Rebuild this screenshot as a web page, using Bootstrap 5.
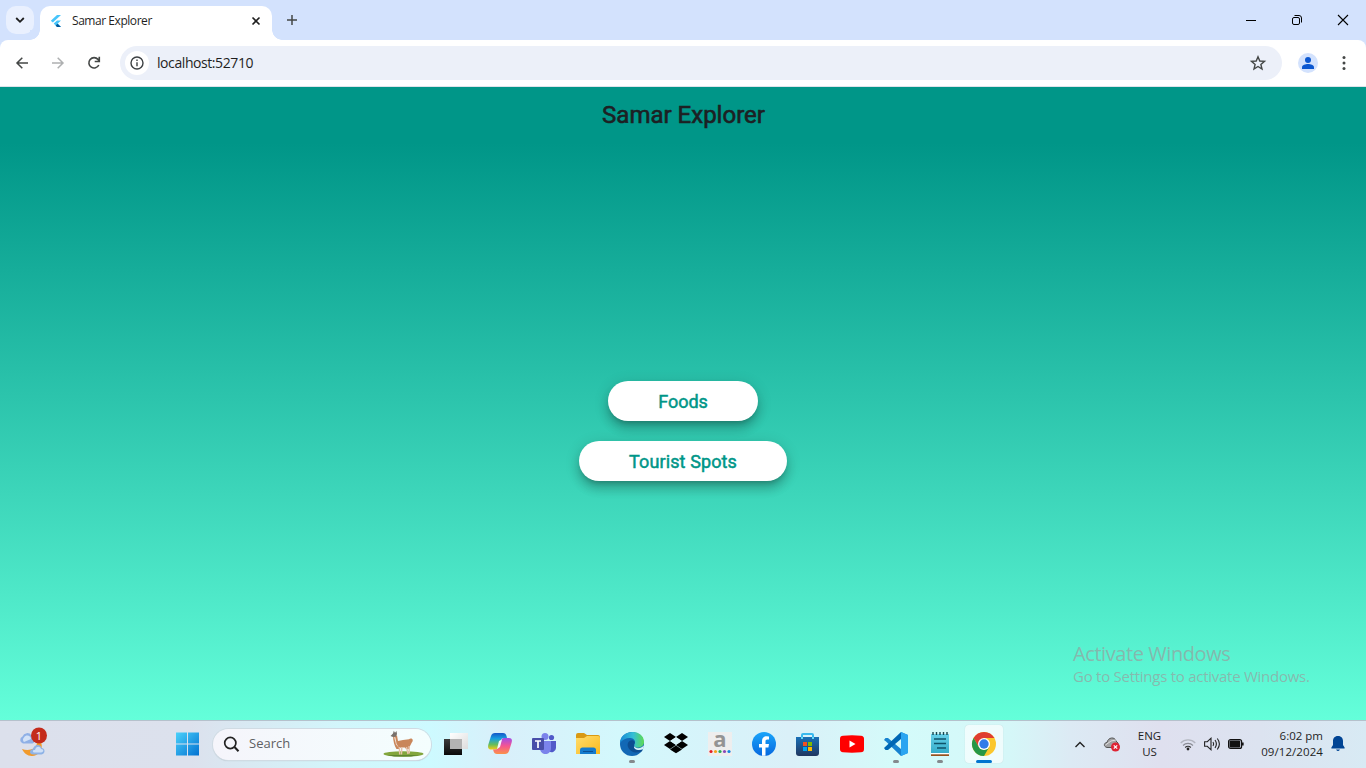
<!DOCTYPE html>
<html lang="en">
<head>
<meta charset="utf-8">
<title>Samar Explorer</title>
<link href="https://cdn.jsdelivr.net/npm/bootstrap@5.3.0/dist/css/bootstrap.min.css" rel="stylesheet">
<style>
body{width:1366px;height:768px;font-family:"Open Sans","Noto Sans",sans-serif;color:#1f1f1f;background:#fff}
svg{display:block;flex:none;overflow:visible}
.tabstrip{height:40px;background:#d3e2fd}
.tab-menu{width:28px;height:28px;border-radius:10px;background:#e9f0fe;margin:6px 6px 0}
.tab-active{width:232px;height:34px;margin-top:6px;border-radius:10px 10px 0 0;background:#fff;font-size:12px;padding:0 10px;position:relative}
.tab-active::before,.tab-active::after{content:"";position:absolute;bottom:0;width:10px;height:10px}
.tab-active::before{left:-10px;background:radial-gradient(circle at 0 0,#d3e2fd 9.5px,#fff 10px)}
.tab-active::after{right:-10px;background:radial-gradient(circle at 100% 0,#d3e2fd 9.5px,#fff 10px)}
.tab-title{letter-spacing:-.45px;margin-left:10px;padding-bottom:5px}
.win-btn{width:46px;height:40px}
.toolbar-wrap{background:#d3e2fd}
.toolbar{height:47px;background:#fff;border-radius:8px 8px 0 0;border-bottom:1px solid #dde3ea}
.tool-btn{width:36px;height:46px}
.omnibox{height:34px;width:1162px;background:#ecf0f9;margin-left:8px;font-size:14px}
.site-info{width:24px;height:24px;background:#fff;margin-left:5px}
.url{margin-left:8px;letter-spacing:-.42px;padding-bottom:2px}
.avatar{width:20px;height:20px;background:#d3e2fd;margin-left:16px}
.page{height:633px;background:linear-gradient(#009688 56px,#64ffda);font-family:Roboto,sans-serif}
.app-title{height:56px;font-size:24px;font-weight:400;-webkit-text-stroke:.6px #1d2023;color:#1d2023;padding-left:1px}
.pill-stack{gap:20px;padding-bottom:1px}
.pill{height:40px;background:#fff;color:#009688;font-size:18px;-webkit-text-stroke:.5px #009688;padding:0 50px;border-radius:20px;box-shadow:0 5px 5px -3px rgba(0,0,0,.2),0 8px 10px 1px rgba(0,0,0,.14),0 3px 14px 2px rgba(0,0,0,.12)}
.pill-wide{letter-spacing:.12px}
.watermark{left:1073px;top:641px;color:rgba(155,155,155,.68);font-family:"Open Sans",sans-serif;white-space:nowrap}
.wm-1{font-size:20px;line-height:25px;letter-spacing:-.42px}
.wm-2{font-size:15px;line-height:20px;letter-spacing:-.26px}
.taskbar{height:48px;border-top:1px solid #b5c1cc;padding-bottom:1px;background:linear-gradient(90deg,#dce0ec 0,#dce1ed 190px,#d2f6fb 340px,#cdfaff 430px,#d9effa 500px,#d3f8fc 620px,#d7f3fa 720px,#daf0f8 790px,#d4fbfa 900px,#d5f7f8 1010px,#dceaf4 1070px,#dfe0ef 1160px,#dce3f0 1260px,#d8eaf4 1366px)}
.weather{width:166px;padding-left:19px}
.slot{width:44px;height:46px;position:relative}
.slot.running::after{content:"";position:absolute;bottom:4px;left:19px;width:6px;height:3px;border-radius:2px;background:#84898d}
.slot.current::before{content:"";position:absolute;inset:4px 3px 4px;border-radius:4px;background:rgba(255,255,255,.62);box-shadow:0 0 1px #b8c8cc}
.slot.current::after{width:16px;left:14px;background:#0075cf}
.slot svg{position:relative}
.searchbox{width:218px;height:31px;margin:0 3px;background:linear-gradient(90deg,#f5f5fb,#f4fefe);font-size:13px;color:#5e6063;box-shadow:0 0 0 1px #d0dbe3,0 1px 1px #aebcc4}
.tile-a{width:24px;height:24px;background:#eee}
.tray{font-size:11.5px;line-height:16px}
</style>
</head>
<body class="d-flex flex-column overflow-hidden">

<header>
  <div class="tabstrip d-flex">
    <div class="tab-menu d-flex align-items-center justify-content-center"><svg width="10" height="10" fill="none" stroke="#1f1f1f" stroke-width="1.8"><path d="M1.2 3 5 6.8 8.800 3"/></svg></div>
    <div class="tab-active d-flex align-items-center">
      <svg class="mb-1" width="12" height="12" viewBox="0 0 12 12"><path d="M7 0h4L2.800 7.600.8 5.700z" fill="#47c5fb"/><path d="M7 5.400h4L7.800 8.600 11 12H7L3.700 8.600z" fill="#47c5fb"/><path d="M5.700 10.400 7.500 8.700 11 12H7z" fill="#01579b"/></svg>
      <span class="tab-title">Samar Explorer</span>
      <svg class="ms-auto mb-1" style="margin-right:2px" width="8" height="8" stroke="#1f1f1f" stroke-width="1.600"><path d="M.5.5l7 7m0-7l-7 7"/></svg>
    </div>
    <svg style="margin:15px 0 0 15px" width="10" height="10" stroke="#444746" stroke-width="1.500"><path d="M5 0v10M0 5h10"/></svg>
    <div class="ms-auto d-flex">
      <div class="win-btn d-flex align-items-center justify-content-center"><svg width="10" height="10"><path d="M0 5.500h10" stroke="#000"/></svg></div>
      <div class="win-btn d-flex align-items-center justify-content-center"><svg width="10" height="10" fill="none" stroke="#000"><rect x=".5" y="2.500" width="7" height="7" rx="1.500"/><path d="M2.500.5H7a2.500 2.500 0 0 1 2.500 2.500v4.500"/></svg></div>
      <div class="win-btn d-flex align-items-center justify-content-center"><svg width="10" height="10" stroke="#000" stroke-width="1.100"><path d="M0 0l10 10m0-10l-10 10"/></svg></div>
    </div>
  </div>
  <div class="toolbar-wrap">
    <div class="toolbar d-flex align-items-center">
      <div class="tool-btn ms-1 d-flex align-items-center justify-content-center"><svg width="12" height="12" fill="none" stroke="#444746" stroke-width="1.500"><path d="M12 6H1M6.300.7 1 6l5.300 5.300"/></svg></div>
      <div class="tool-btn d-flex align-items-center justify-content-center"><svg width="12" height="12" fill="none" stroke="#aeb0b1" stroke-width="1.500"><path d="M0 6h11M5.700.7 11 6l-5.300 5.300"/></svg></div>
      <div class="tool-btn d-flex align-items-center justify-content-center"><svg width="14" height="14" fill="none" stroke="#444746" stroke-width="1.600"><path d="M11.800 9A5.200 5.200 0 1 1 11 3.400L12 5M12.300.8v4.700H7.700"/></svg></div>
      <div class="omnibox rounded-pill d-flex align-items-center">
        <div class="site-info rounded-circle d-flex align-items-center justify-content-center"><svg width="14" height="14" fill="none" stroke="#3c4043" stroke-width="1.400"><circle cx="7" cy="7" r="6"/><path d="M7 6.200v4M7 3.500v1.500"/></svg></div>
        <span class="url">localhost:52710</span>
        <svg class="ms-auto" style="margin-right:16px" width="16" height="16" viewBox="0 0 16 16" fill="none" stroke="#444746" stroke-width="1.400"><path d="M8 1.700 9.800 6l4.700.4-3.600 3 1.100 4.600L8 11.500 4 14l1.100-4.600-3.600-3L6.200 6z"/></svg>
      </div>
      <div class="avatar rounded-circle"><svg width="20" height="20" fill="#0b57d0"><circle cx="10" cy="7" r="3"/><path d="M4 16v-1.800C4 12 7.500 11 10 11s6 1 6 3.200V16z"/></svg></div>
      <svg class="ms-auto" style="margin-right:20px" width="4" height="16" fill="#444746"><circle cx="2" cy="2.500" r="1.500"/><circle cx="2" cy="8" r="1.500"/><circle cx="2" cy="13.500" r="1.500"/></svg>
    </div>
  </div>
</header>

<main class="page d-flex flex-column">
  <h1 class="app-title m-0 d-flex align-items-center justify-content-center">Samar Explorer</h1>
  <div class="pill-stack flex-grow-1 d-flex flex-column align-items-center justify-content-center">
    <button class="pill border-0">Foods</button>
    <button class="pill pill-wide border-0">Tourist Spots</button>
  </div>
</main>
<div class="watermark position-absolute"><div class="wm-1">Activate Windows</div><div class="wm-2">Go to Settings to activate Windows.</div></div>

<footer class="taskbar d-flex align-items-center">
  <div class="weather"><svg width="30" height="32" viewBox="0 0 30 32"><path d="M22 14c3 8-3 14-9 14-5 0-8-3-10-7 6 2 14 1 15-6z" fill="#f19a2c"/><path d="M4 15.500a3.700 3.700 0 0 1-.5-7 5 5 0 0 1 9-1c4 0 5 6.500 1 8z" fill="#8fb0e6"/><path d="M5 14a3 3 0 0 1 0-4.500c2-3.500 7-2 7 1.500z" fill="#d3e2f7"/><path d="M14 26.500c-4 0-4-5 0-5.500 1-5 8-5 8.500-1 4 0 4 6 0 6.500z" fill="#8fb3e6"/><path d="M15 24.500c-2-1-1-3 1-2.500 1-4 5-4 6-1 3 0 3 3 0 3.500z" fill="#cfe0f7"/><circle cx="20" cy="7.500" r="8" fill="#c42b1c"/><text x="20" y="11.500" font-size="11" fill="#fff" text-anchor="middle">1</text></svg></div>

  <div class="slot d-flex align-items-center justify-content-center"><svg width="24" height="24"><defs><linearGradient id="win" x2="24" y2="24" gradientUnits="userSpaceOnUse"><stop stop-color="#4cd2fb"/><stop offset="1" stop-color="#006ed0"/></linearGradient></defs><path d="M0 .5h11v11H0zM12 .5h11v11H12zM0 12.500h11v11H0zM12 12.500h11v11H12z" fill="url(#win)"/></svg></div>
  <div class="searchbox rounded-pill d-flex align-items-center">
    <svg style="margin-left:10px" width="17" height="17" fill="none" stroke="#222" stroke-width="1.700"><circle cx="7.300" cy="7" r="5.600"/><path d="m11.500 11 4 4.300" stroke-width="2"/></svg>
    <span style="margin-left:9px">Search</span>
    <svg class="ms-auto" style="margin-right:7px" width="41" height="28" viewBox="0 0 41 28"><ellipse cx="20.500" cy="24" rx="20" ry="2.700" fill="#82a63c"/><path d="M4 25h32l-8 1.500H11z" fill="#5d8530"/><path d="M10 5.500h4l1 5.500 5-1 6-.8q1-1 2.500-.7c1.800.5 1.500 3 .3 4l-1.800 3.500-1 3h-3l-1-1.500-4.500 0-1 1.500h-3c-2-3-3.500-8-3.500-13.500z" fill="#c9865a"/><path d="m11 7 1.500.5 1 6 2.500 4.500-3-3.500z" fill="#f1ded0"/><path d="M16.300 17l.4 7.500M18.800 17l-.3 7.500M23.500 17l1.500 7M26 16l.3 7.500" stroke="#e7c2aa" stroke-width="1.400"/><path d="M7.500 6 10 3.500l.8-2.700 1.200 2L13.500 1l.5 3-1 2.500-3 .5z" fill="#77706b"/></svg>
  </div>
  <div class="slot d-flex align-items-center justify-content-center"><svg width="24" height="24"><defs><linearGradient id="tv" x2="0" y2="1"><stop stop-color="#3b3b3b"/><stop offset="1" stop-color="#090909"/></linearGradient><linearGradient id="tl" x2="1" y2="1"><stop stop-color="#fff"/><stop offset="1" stop-color="#ddd"/></linearGradient></defs><path d="M0 7h18v16H0z" fill="url(#tv)"/><path d="M6 1h18v16H6z" fill="url(#tl)"/><path d="M6 7h12v10H6z" fill="#b3b3b3"/></svg></div>
  <div class="slot d-flex align-items-center justify-content-center"><svg width="24" height="24" viewBox="0 0 24 24"><defs><linearGradient id="ca" x2="0" y2="1"><stop stop-color="#1557c8"/><stop offset=".35" stop-color="#18a0df"/><stop offset=".7" stop-color="#67bd5b"/><stop offset="1" stop-color="#f4cb16"/></linearGradient><linearGradient id="cb" x2="0" y2="1"><stop stop-color="#a14ce8"/><stop offset=".5" stop-color="#f55691"/><stop offset="1" stop-color="#fb9149"/></linearGradient></defs><path d="M7 1h8c2 0 3 1 3.500 3L19 6h-3c-2 0-3 1-3.500 3l-2 6c-.6 2-1.500 2.500-4 2.500H3C0 17.500-.4 15 .5 12L3 4c.6-2 2-3 4-3z" fill="url(#ca)"/><path d="M17 22H9c-2 0-3-1-3.500-3L5 17.500h2c2.500 0 3.500-1 4-3l2-6C13.600 6.500 15 6 17 6h4c3 0 3.400 2 2.500 5L21 19c-.7 2-2 3-4 3z" fill="url(#cb)"/><path d="m11 9 3-1.500-2 7.500-3 2z" fill="#f3f8fb"/></svg></div>
  <div class="slot d-flex align-items-center justify-content-center"><svg width="24" height="24" viewBox="0 0 24 24"><circle cx="19.500" cy="5.500" r="2.600" fill="#5059c9"/><path d="M17 9h7v7a4.500 4.500 0 0 1-7 3.500z" fill="#5059c9"/><circle cx="13" cy="4.500" r="3.500" fill="#7b83eb"/><path d="M8 9h11v7c0 8-11 8-11 0z" fill="#7b83eb"/><rect y="6" width="12" height="12" rx="1" fill="#484ea9"/><path d="M3 9h6M6 9v7" stroke="#fff" stroke-width="1.700"/></svg></div>
  <div class="slot d-flex align-items-center justify-content-center"><svg width="24" height="24"><defs><linearGradient id="fo" x2="1" y2="1"><stop stop-color="#ffdd6c"/><stop offset="1" stop-color="#f9b91e"/></linearGradient></defs><path d="M0 3q0-2 2-2h6l3 2h11q2 0 2 2v5H0z" fill="#d99913"/><path d="M0 6h8l3-2h11q2 0 2 2v16H0z" fill="url(#fo)"/><path d="M4 22v-4q0-2.500 2.500-2.500h11q2.500 0 2.500 2.500v4z" fill="#147bcd"/><path d="M7 19.500h10" stroke="#0b4f94"/></svg></div>
  <div class="slot running d-flex align-items-center justify-content-center"><svg width="24" height="24" viewBox="0 0 24 24"><defs><linearGradient id="ed" x2="1"><stop stop-color="#1689d5"/><stop offset=".55" stop-color="#35bfd6"/><stop offset="1" stop-color="#5edb51"/></linearGradient></defs><circle cx="12" cy="12" r="12" fill="#1268b5"/><path d="M0 11C0-3 24-4 24 10c0 6-8 7-10 4-1-1 1-2 1-4 0-5-10-6-15 1z" fill="url(#ed)"/><path d="M14.500 14c-1-.8.500-2 .3-4C13 6 6 9 8 15c2 5 8 7 13.500 4.500l1.500-2c-4 2-9 0-8.500-3.500z" fill="#0c4d91"/><path d="M14 14c2 3.300 7 2.500 10-.5l-.7 3.500c-4 2-10 1-9.300-3z" fill="#d8f3f8"/></svg></div>
  <div class="slot d-flex align-items-center justify-content-center"><svg width="24" height="24" viewBox="0 0 24 24"><path d="M6 1l6 4-6 4-6-4zM18 1l6 4-6 4-6-4zM6 9l6 4-6 4-6-4zM18 9l6 4-6 4-6-4zM12 13.500l6 4-6 3.800-6-3.800z" fill="#000"/><path d="m6.300 9 5.700-3.800L17.700 9 12 12.800z" fill="#d7f3fa"/></svg></div>
  <div class="slot d-flex align-items-center justify-content-center"><svg class="tile-a" width="24" height="24"><text x="12" y="14.500" text-anchor="middle" font-family="Open Sans" font-weight="700" font-size="22" fill="#949494">a</text><g><circle cx="3" cy="19.500" r="1.600" fill="#e31e24"/><circle cx="7.500" cy="19.500" r="1.600" fill="#f6a11b"/><circle cx="12" cy="19.500" r="1.600" fill="#29aa55"/><circle cx="16.500" cy="19.500" r="1.600" fill="#8b48b7"/><circle cx="21" cy="19.500" r="1.600" fill="#1683df"/></g></svg></div>
  <div class="slot d-flex align-items-center justify-content-center"><svg width="24" height="24"><defs><linearGradient id="fb" x2="0" y2="1"><stop stop-color="#1aa5fa"/><stop offset="1" stop-color="#0768df"/></linearGradient></defs><circle cx="12" cy="12" r="12" fill="url(#fb)"/><path d="M10 23.800v-8.300H7V12h3V9.300c0-3.600 2-5.100 4.500-5.100l2.500.2v3h-1.600c-1.500 0-1.900.8-1.900 2V12H17l-.6 3.500h-2.900v8.300z" fill="#fff"/></svg></div>
  <div class="slot d-flex align-items-center justify-content-center"><svg width="24" height="24"><defs><linearGradient id="st" x2="0" y2="1"><stop stop-color="#1970b7"/><stop offset="1" stop-color="#20365f"/></linearGradient></defs><path d="M6 7V3q0-1 1-1h9q1 0 1 1v4" fill="none" stroke="#39b9ee" stroke-width="2"/><path d="M0 5h23v16q0 3-3 3H3q-3 0-3-3z" fill="url(#st)"/><path d="M6 7V5m11 2V5" stroke="#62d6f7" stroke-width="2"/><path d="M7 10h4v4H7z" fill="#f25022"/><path d="M12 10h4v4h-4z" fill="#7fba00"/><path d="M7 15h4v4H7z" fill="#00a4ef"/><path d="M12 15h4v4h-4z" fill="#ffb900"/></svg></div>
  <div class="slot d-flex align-items-center justify-content-center"><svg width="24" height="24"><path d="M3 3.700q9-.7 18 0 3 .3 3 3v10.600q0 3-3 3-9 .7-18 0-3-.3-3-3V6.700q0-3 3-3z" fill="#f00"/><path d="m9.500 8.500 6 3.500-6 3.500z" fill="#fff"/></svg></div>
  <div class="slot running d-flex align-items-center justify-content-center"><svg width="24" height="24" viewBox="0 0 24 24"><path d="M17 0 24 3v18l-7 3-15-14.500L0 8l1.500-2L4 6l13 11z" fill="#1782cf"/><path d="m0 16 17-16v7L4 18H1.500z" fill="#0067b4"/><path d="m17 0 7 3v18l-7 3z" fill="#2aa5f1"/></svg></div>
  <div class="slot running d-flex align-items-center justify-content-center"><svg width="24" height="24"><defs><linearGradient id="np" x2="0" y2="1"><stop stop-color="#67d1ea"/><stop offset="1" stop-color="#34acc9"/></linearGradient></defs><path d="M3 2h18v19H3z" fill="url(#np)"/><path d="M3 21h18v1.500H3z" fill="#fff"/><path d="M3 22.300h18v1.700H3z" fill="#96511e"/><path d="M5 0v3m3.500-3v3M12 0v3m3.500-3v3M19 0v3" stroke="#154650" stroke-width="1.400"/><path d="M6 7h12M6 11.500h12M9 16h9" stroke="#0f536a" stroke-width="1.600"/></svg></div>
  <div class="slot running current d-flex align-items-center justify-content-center"><svg width="24" height="24" viewBox="0 0 24 24"><circle cx="12" cy="12" r="12" fill="#fbc72d"/><path d="M1.600 6A12 12 0 0 1 22.400 6H12L6.800 15z" fill="#df3d31"/><path d="M1.600 6 6.800 15 12 18l5.200-3L12 24A12 12 0 0 1 1.600 6z" fill="#269746"/><circle cx="12" cy="12" r="6" fill="#fff"/><circle cx="12" cy="12" r="4.700" fill="#307ce9"/></svg></div>

  <div class="tray ms-auto d-flex align-items-center">
    <svg width="10" height="7" fill="none" stroke="#222" stroke-width="1.400"><path d="m.5 6 4.500-4.500L9.500 6"/></svg>
    <svg style="margin-left:18px" width="18" height="16"><path d="M4 11.500c-4-1-3-5 0-5C5 1 12 .5 13 5l2 2v4.500z" fill="#a2a2a4" stroke="#555"/><path d="M2.500 9 8 5l5-1" stroke="#e1e1e1" fill="none"/><circle cx="12.500" cy="11" r="4.500" fill="#df2434"/><path d="m10.800 9.300 3.400 3.400m0-3.400-3.400 3.400" stroke="#fff" stroke-width="1.200"/></svg>
    <div class="text-center" style="width:25px;margin-left:16px">ENG<br>US</div>
    <svg style="margin-left:18px" width="16" height="13" fill="none"><path d="M.7 5a10.300 10.300 0 0 1 14.600 0" stroke="#b2b5bf" stroke-width="1.200"/><path d="M3 7.500a7 7 0 0 1 10 0" stroke="#8b8d96" stroke-width="1.100"/><path d="M5.200 9.500a4 4 0 0 1 5.600 0" stroke="#333" stroke-width="1.200"/><circle cx="8" cy="11" r="1.400" fill="#222"/></svg>
    <svg style="margin-left:8px" width="17" height="14" fill="none" stroke="#222" stroke-width="1.100"><path d="M.6 4.700h2.700L7 1.200v11.600L3.300 9.300H.6zM9 5q1.400 2 0 4M11 3q2.800 4 0 8M13.300 1.500q4.200 5.500 0 11"/></svg>
    <svg style="margin-left:7px" width="16" height="10"><rect x=".6" y=".6" width="13" height="8.800" rx="2" fill="none" stroke="#111" stroke-width="1.200"/><rect x="1.500" y="1.500" width="10.700" height="7" rx="1" fill="#111"/><path d="M14.800 3.500v3" stroke="#111" stroke-width="1.700"/></svg>
    <div class="text-end text-nowrap" style="width:70px;margin-left:9px;margin-right:8px"><div>6:02 pm</div><div style="letter-spacing:.08px">09/12/2024</div></div>
    <svg style="margin-right:21px" width="14" height="16" fill="#004494"><path d="M7 0c3.500 0 5 2.500 5 5v4l1.600 2.500v1H.4v-1L2 9V5c0-2.500 1.500-5 5-5zM5 13.500h4q-2 3-4 0z"/></svg>
  </div>
</footer>
<script src="https://cdn.jsdelivr.net/npm/bootstrap@5.3.0/dist/js/bootstrap.bundle.min.js"></script>
</body>
</html>
